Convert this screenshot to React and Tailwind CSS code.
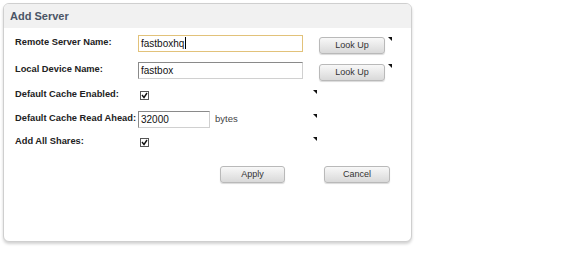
import React from 'react';

const Marker = () => (
  <svg width="4" height="4" viewBox="0 0 4 4" className="block">
    <path d="M0 0 H4 V4 Z" fill="#111" />
  </svg>
);

const CheckBox = () => (
  <span className="inline-flex items-center justify-center w-[9px] h-[9px] border border-[#555] bg-white">
    <svg width="7" height="7" viewBox="0 0 7 7">
      <path d="M1 3 L3 5.5 L6 1" stroke="#111" strokeWidth="1.4" fill="none" />
    </svg>
  </span>
);

const Btn = ({ children, w = 'w-[66px]' }) => (
  <button className={`${w} h-[17px] rounded-[3px] border border-[#b9b9b9] bg-gradient-to-b from-[#f8f8f8] to-[#d9d9d9] text-[9px] text-[#333] leading-none shadow-[0_1px_1px_rgba(0,0,0,0.15)]`}>
    {children}
  </button>
);

const Label = ({ children }) => (
  <div className="w-[123px] shrink-0 whitespace-nowrap text-[9.3px] font-bold text-[#222]">{children}</div>
);

function App() {
  return (
    <div className="w-[564px] h-[256px] bg-white font-['Liberation_Sans',Arial,sans-serif]">
      <div className="pt-[3px] pl-[3px]">
        <div className="w-[409px] h-[239px] rounded-[6px] border border-[#cfcfcf] bg-white shadow-[0_2px_3px_rgba(0,0,0,0.18)] overflow-hidden">
          {/* Header */}
          <div className="h-[24px] bg-[#f1f1f1] flex items-center pl-[6px]">
            <h1 className="text-[11px] font-bold text-[#4b5566]">Add Server</h1>
          </div>

          <div className="pl-[11px]">
            {/* Remote Server Name */}
            <div className="flex items-center h-[20px] mt-[5px]">
              <Label>Remote Server Name:</Label>
              <div className="w-[165px] h-[17px] border border-[#e2c27a] bg-white flex items-center px-[2px] text-[10px] text-[#111]">
                fastboxhq<span className="inline-block w-px h-[12px] bg-black ml-px" />
              </div>
              <div className="ml-[16px]"><Btn>Look Up</Btn></div>
              <div className="ml-[3px] self-start mt-[4px]"><Marker /></div>
            </div>

            {/* Local Device Name */}
            <div className="flex items-center h-[20px] mt-[7px]">
              <Label>Local Device Name:</Label>
              <div className="w-[165px] h-[17px] border border-[#8a8a8a] border-b-[#d0d0d0] border-r-[#d0d0d0] bg-white flex items-center px-[2px] text-[10px] text-[#111]">
                fastbox
              </div>
              <div className="ml-[16px]"><Btn>Look Up</Btn></div>
              <div className="ml-[3px] self-start mt-[4px]"><Marker /></div>
            </div>

            {/* Default Cache Enabled */}
            <div className="flex items-center h-[20px] mt-[5px]">
              <Label>Default Cache Enabled:</Label>
              <div className="w-[175px] pl-[2px] flex items-center"><CheckBox /></div>
              <div className="self-start mt-[5px]"><Marker /></div>
            </div>

            {/* Default Cache Read Ahead */}
            <div className="flex items-center h-[20px] mt-[4px]">
              <Label>Default Cache Read Ahead:</Label>
              <div className="w-[175px] flex items-center">
                <div className="w-[72px] h-[17px] border border-[#8a8a8a] border-b-[#d0d0d0] border-r-[#d0d0d0] bg-white flex items-center px-[2px] text-[10px] text-[#111]">
                  32000
                </div>
                <span className="ml-[5px] text-[9.5px] text-[#444]">bytes</span>
              </div>
              <div className="self-start mt-[5px]"><Marker /></div>
            </div>

            {/* Add All Shares */}
            <div className="flex items-center h-[20px] mt-[3px]">
              <Label>Add All Shares:</Label>
              <div className="w-[175px] pl-[2px] flex items-center"><CheckBox /></div>
              <div className="self-start mt-[5px]"><Marker /></div>
            </div>

            {/* Actions */}
            <div className="flex mt-[14px] pl-[205px] gap-[39px]">
              <Btn w="w-[65px]">Apply</Btn>
              <Btn w="w-[66px]">Cancel</Btn>
            </div>
          </div>
        </div>
      </div>
    </div>
  );
}

export default App;
